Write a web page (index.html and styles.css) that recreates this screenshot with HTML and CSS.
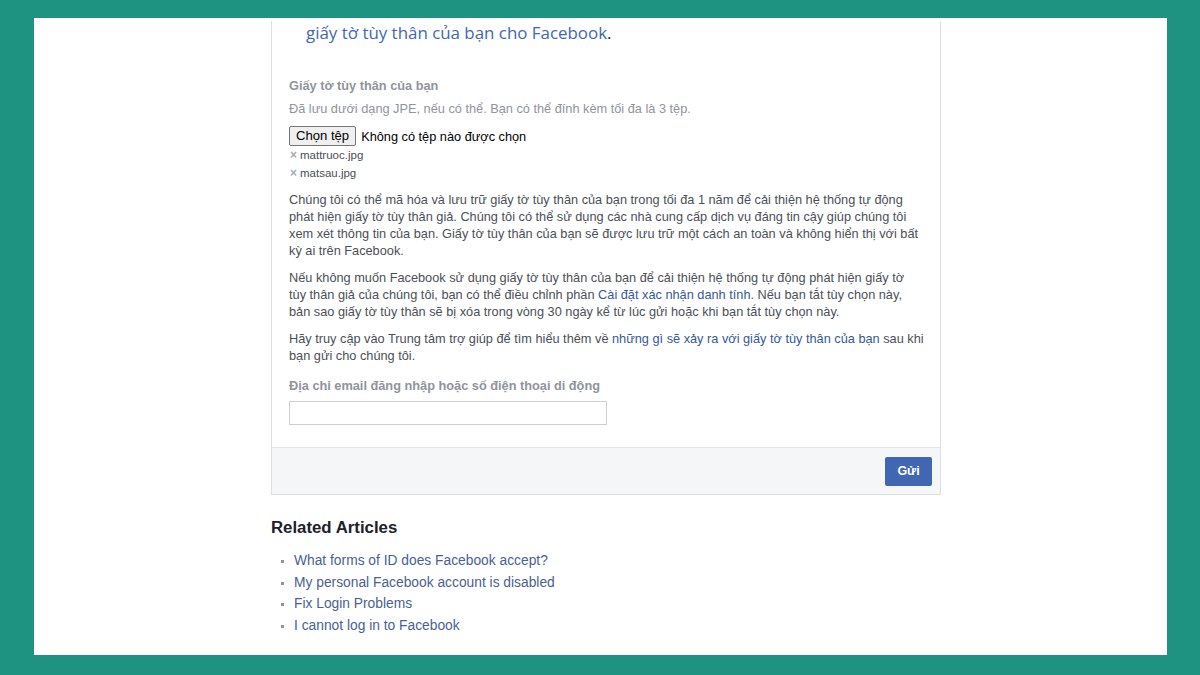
FILE: index.html
```html
<!DOCTYPE html>
<html lang="vi">
<head>
<meta charset="utf-8">
<title>Giấy tờ tùy thân</title>
<link rel="stylesheet" href="styles.css">
</head>
<body>
<div class="frame">
  <div class="panel">
    <div class="column">
      <div class="card">
        <div class="card-body">
          <p class="intro"><a href="#">giấy tờ tùy thân của bạn cho Facebook</a>.</p>

          <div class="field-label first">Giấy tờ tùy thân của bạn</div>
          <div class="hint">Đã lưu dưới dạng JPE, nếu có thể. Bạn có thể đính kèm tối đa là 3 tệp.</div>
          <div class="file-row">
            <span class="file-btn">Chọn tệp</span>
            <span class="file-none">Không có tệp nào được chọn</span>
          </div>
          <ul class="files">
            <li><span class="x">×</span>mattruoc.jpg</li>
            <li><span class="x">×</span>matsau.jpg</li>
          </ul>

          <p class="para para-first">Chúng tôi có thể mã hóa và lưu trữ giấy tờ tùy thân của bạn trong tối đa 1 năm để cải thiện hệ thống tự động<br>phát hiện giấy tờ tùy thân giả. Chúng tôi có thể sử dụng các nhà cung cấp dịch vụ đáng tin cậy giúp chúng tôi<br>xem xét thông tin của bạn. Giấy tờ tùy thân của bạn sẽ được lưu trữ một cách an toàn và không hiển thị với bất<br>kỳ ai trên Facebook.</p>
          <p class="para">Nếu không muốn Facebook sử dụng giấy tờ tùy thân của bạn để cải thiện hệ thống tự động phát hiện giấy tờ<br>tùy thân giả của chúng tôi, bạn có thể điều chỉnh phần <a href="#">Cài đặt xác nhận danh tính</a>. Nếu bạn tắt tùy chọn này,<br>bản sao giấy tờ tùy thân sẽ bị xóa trong vòng 30 ngày kể từ lúc gửi hoặc khi bạn tắt tùy chọn này.</p>
          <p class="para">Hãy truy cập vào Trung tâm trợ giúp để tìm hiểu thêm về <a href="#">những gì sẽ xảy ra với giấy tờ tùy thân của bạn</a> sau khi<br>bạn gửi cho chúng tôi.</p>

          <div class="field-label email-label">Địa chỉ email đăng nhập hoặc số điện thoại di động</div>
          <div class="text-input"></div>
        </div>
        <div class="card-footer">
          <span class="submit">Gửi</span>
        </div>
      </div>

      <h2 class="related-title">Related Articles</h2>
      <ul class="related">
        <li><a href="#">What forms of ID does Facebook accept?</a></li>
        <li><a href="#">My personal Facebook account is disabled</a></li>
        <li><a href="#">Fix Login Problems</a></li>
        <li><a href="#">I cannot log in to Facebook</a></li>
      </ul>
    </div>
  </div>
</div>
</body>
</html>
```

FILE: styles.css
```css
html, body {
  margin: 0;
  padding: 0;
}
body {
  background: #1f9381;
  width: 1200px;
  height: 675px;
  overflow: hidden;
  font-family: "Liberation Sans", Arial, sans-serif;
}
.frame {
  padding: 18px 33px 20px 34px;
}
.panel {
  background: #ffffff;
  height: 637px;
  overflow: hidden;
  padding-left: 237px;
}
.column {
  width: 670px;
}
.card {
  border: 1px solid #dddfe2;
  border-top: none;
}
.card-body {
  padding: 0 0 22px 17px;
  width: 660px;
}
.intro {
  margin: 3px 0 0 0;
  padding-left: 17px;
  font-family: "Open Sans", "Noto Sans", sans-serif;
  font-size: 16.9px;
  line-height: 23px;
  color: #1d2129;
  white-space: nowrap;
}
.intro a {
  color: #4267b2;
  text-decoration: none;
}
.field-label {
  font-size: 12.75px;
  font-weight: bold;
  line-height: 16px;
  color: #90949c;
}
.field-label.first {
  margin-top: 34px;
}
.hint {
  margin-top: 7px;
  font-size: 12.75px;
  line-height: 16px;
  color: #90949c;
}
.file-row {
  margin-top: 9px;
  display: flex;
  align-items: center;
  height: 20px;
}
.file-btn {
  box-sizing: border-box;
  height: 20px;
  padding: 0 6px;
  border: 1px solid #767676;
  border-radius: 2px;
  background: #efefef;
  font-size: 13.1px;
  line-height: 18px;
  color: #000;
}
.file-none {
  margin-left: 5px;
  font-size: 12.75px;
  color: #000;
}
.files {
  list-style: none;
  margin: 0;
  padding: 0;
}
.files li {
  font-size: 11.5px;
  line-height: 18px;
  color: #4b4f56;
}
.x {
  display: inline-block;
  width: 11px;
  padding-left: 1px;
  box-sizing: border-box;
  color: #a3aabc;
  font-size: 12px;
  font-weight: bold;
}
.para {
  margin: 10px 0 0 0;
  font-size: 12.75px;
  line-height: 17px;
  color: #4b4f56;
  white-space: nowrap;
}
.para.para-first {
  margin-top: 9px;
}
.para a {
  color: #365899;
  text-decoration: none;
}
.email-label {
  margin-top: 14px;
}
.text-input {
  margin-top: 7px;
  box-sizing: border-box;
  width: 318px;
  height: 24px;
  border: 1px solid #ccd0d5;
  background: #fff;
}
.card-footer {
  display: flex;
  justify-content: flex-end;
  align-items: center;
  height: 46px;
  padding-right: 8px;
  background: #f5f6f7;
  border-top: 1px solid #e5e5e5;
}
.submit {
  display: flex;
  align-items: center;
  justify-content: center;
  width: 47px;
  height: 29px;
  border-radius: 2px;
  background: #4267b2;
  color: #fff;
  font-size: 12.5px;
  font-weight: bold;
}
.related-title {
  margin: 23px 0 0 0;
  font-size: 16.8px;
  line-height: 20px;
  font-weight: bold;
  color: #1d2129;
}
.related {
  margin: 12px 0 0 0;
  padding-left: 23px;
  list-style: square;
}
.related li {
  font-size: 13.8px;
  line-height: 21.7px;
  color: #8b93a8;
}
.related li::marker {
  font-size: 10px;
  color: #8b93a8;
}
.related a {
  color: #4b5f91;
  text-decoration: none;
}
```
